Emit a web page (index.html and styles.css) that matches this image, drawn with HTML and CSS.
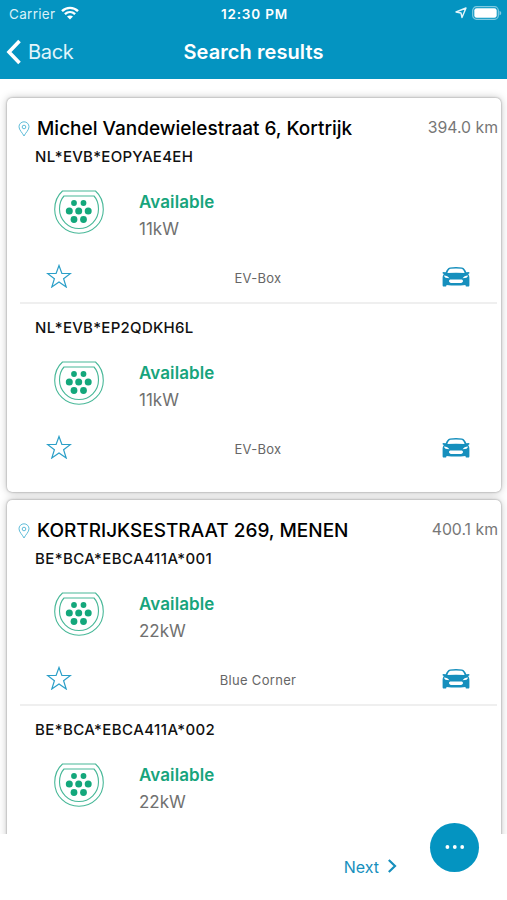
FILE: index.html
```html
<!DOCTYPE html>
<html lang="en">
<head>
    <meta charset="UTF-8">
    <meta name="viewport" content="width=device-width, initial-scale=1.0">
    <title>Search results</title>
    <link rel="stylesheet" href="styles.css">
</head>
<body>

    <!-- Icons shared by the station rows -->
    <svg class="symbols">
        <symbol id="pin" viewBox="0 0 12 16">
            <path d="M6 15C4.6 12 1 9 1 5.8a5 5 0 0 1 10 0C11 9 7.4 12 6 15z"/>
            <circle cx="6" cy="6" r="1.8"/>
        </symbol>
        <symbol id="plug" viewBox="0 0 50 44">
            <path d="M8.500 1h33C46 5 49.300 12 49.300 19.500c0 13.500-10.900 23.800-24.300 23.800S.7 33 .7 19.500C.7 12 4 5 8.500 1z"/>
            <path d="M10 6h30c3 3.200 4.500 8 4.500 13 0 10.800-8.700 19.500-19.500 19.500S5.500 29.800 5.500 19c0-5 1.500-9.800 4.500-13z"/>
            <g class="pins">
                <circle cx="20" cy="13" r="2.900"/>
                <circle cx="29.500" cy="13" r="2.900"/>
                <circle cx="15.300" cy="21" r="3.500"/>
                <circle cx="24.700" cy="21" r="3.500"/>
                <circle cx="34.200" cy="21" r="3.500"/>
                <circle cx="20" cy="29.500" r="3.400"/>
                <circle cx="29.500" cy="29.500" r="3.400"/>
            </g>
        </symbol>
        <symbol id="star" viewBox="0 0 26 24">
            <path d="M13 1.500l2.900 8H24.500l-6.900 5.200 2.600 8.300L13 18l-7.200 5 2.600-8.300L1.500 9.500h8.600z"/>
        </symbol>
        <symbol id="car" viewBox="0 0 28 20">
            <path fill-rule="evenodd" d="M8 .6Q14-.4 20 .6C22.200 1 23.300 3 24.300 5.300L27.300 5v1.500l-1.200.6c1 1.200 1.300 2.600 1.300 4.400V18c0 1-.4 1.500-1.200 1.500h-1.500c-.8 0-1.200-.6-1.200-1.600Q14 19 4.500 17.900c0 1-.4 1.600-1.200 1.600H1.800C1 19.500.6 19 .6 18v-6.500c0-1.800.3-3.200 1.300-4.400L.7 6.500V5l3 .3C4.700 3 5.800 1 8 .6zM8.500 1.800C7 2.100 6 4 5.400 6Q14 5.300 22.600 6C22 4 21 2.100 19.500 1.800Q14 1 8.500 1.800zM2 8.600c.3 2.200 2 2.700 5.400 2.700C6.500 9.700 4.500 8.800 2 8.600zM26 8.600c-.3 2.200-2 2.700-5.400 2.700.9-1.600 2.900-2.500 5.400-2.700zM9 12.500c-1.500 0-2 .7-2 1.500S8 16 9 16h10c1 0 2-1.200 2-2s-.5-1.500-2-1.500z"/>
        </symbol>
    </svg>

    <header>
        <div class="status-bar">
            <div class="carrier">
                <span>Carrier</span>
                <svg class="wifi" viewBox="0 0 18 14">
                    <path d="M1 5.200C5.500.7 12.500.7 17 5.200M3.900 8.200c3-2.800 7.200-2.800 10.200 0"/>
                    <path class="solid" d="M9 13.500l-3-3c1.700-1.400 4.300-1.400 6 0z"/>
                </svg>
            </div>
            <div class="time">12:30 PM</div>
            <div class="indicators">
                <svg class="location" viewBox="0 0 12 12">
                    <path d="M11 1L7 10.500 6 6 1 5z"/>
                </svg>
                <svg class="battery" viewBox="0 0 30 14">
                    <rect class="shell" x=".7" y=".7" width="25.600" height="12.600" rx="3.800"/>
                    <rect class="level" x="2.300" y="2.300" width="22.400" height="9.400" rx="2.300"/>
                    <path class="cap" d="M27.500 4.700c2.300.8 2.300 3.800 0 4.600z"/>
                </svg>
            </div>
        </div>
        <nav>
            <a class="back">
                <svg viewBox="0 0 16 26"><path d="M13.500 2L3 13l10.500 11"/></svg>
                <span>Back</span>
            </a>
            <h1>Search results</h1>
        </nav>
    </header>

    <main>
        <section class="card">
            <div class="address">
                <svg class="pin"><use href="#pin"/></svg>
                <h2>Michel Vandewielestraat 6, Kortrijk</h2>
                <span class="distance">394.0 km</span>
            </div>
            <article class="station">
                <h3>NL*EVB*EOPYAE4EH</h3>
                <div class="connector">
                    <svg class="plug"><use href="#plug"/></svg>
                    <div>
                        <p class="status">Available</p>
                        <p class="power">11kW</p>
                    </div>
                </div>
                <div class="actions">
                    <svg class="star"><use href="#star"/></svg>
                    <span>EV-Box</span>
                    <svg class="car"><use href="#car"/></svg>
                </div>
            </article>
            <article class="station">
                <h3>NL*EVB*EP2QDKH6L</h3>
                <div class="connector">
                    <svg class="plug"><use href="#plug"/></svg>
                    <div>
                        <p class="status">Available</p>
                        <p class="power">11kW</p>
                    </div>
                </div>
                <div class="actions">
                    <svg class="star"><use href="#star"/></svg>
                    <span>EV-Box</span>
                    <svg class="car"><use href="#car"/></svg>
                </div>
            </article>
        </section>

        <section class="card">
            <div class="address">
                <svg class="pin"><use href="#pin"/></svg>
                <h2>KORTRIJKSESTRAAT 269, MENEN</h2>
                <span class="distance">400.1 km</span>
            </div>
            <article class="station">
                <h3 class="long-id">BE*BCA*EBCA411A*001</h3>
                <div class="connector">
                    <svg class="plug"><use href="#plug"/></svg>
                    <div>
                        <p class="status">Available</p>
                        <p class="power">22kW</p>
                    </div>
                </div>
                <div class="actions">
                    <svg class="star"><use href="#star"/></svg>
                    <span>Blue Corner</span>
                    <svg class="car"><use href="#car"/></svg>
                </div>
            </article>
            <article class="station">
                <h3 class="long-id">BE*BCA*EBCA411A*002</h3>
                <div class="connector">
                    <svg class="plug"><use href="#plug"/></svg>
                    <div>
                        <p class="status">Available</p>
                        <p class="power">22kW</p>
                    </div>
                </div>
            </article>
        </section>
    </main>

    <footer>
        <a class="next">
            <span>Next</span>
            <svg viewBox="0 0 10 16"><path d="M1.800 2L8 8l-6.200 6"/></svg>
        </a>
        <button class="more" aria-label="More">
            <svg viewBox="0 0 20 4">
                <circle cx="2.400" cy="2" r="1.900"/>
                <circle cx="9.800" cy="2" r="1.900"/>
                <circle cx="17.200" cy="2" r="1.900"/>
            </svg>
        </button>
    </footer>

</body>
</html>
```
FILE: styles.css
```css
* {
    box-sizing: border-box;
}
body {
    font-family: Inter, "Liberation Sans", sans-serif;
    margin: 0;
    height: 900px;
    display: flex;
    flex-direction: column;
    overflow: hidden;
    background: #fff;
    color: #111;
}
h1, h2, h3, p {
    margin: 0;
    white-space: nowrap;
}
svg {
    display: block;
    flex: none;
    fill: none;
}
.symbols {
    display: none;
}

/* Top bar */
header {
    height: 79px;
    flex: none;
    background: #0494c1;
    color: #fff;
}
.status-bar {
    height: 27px;
    padding: 0 7px 0 9px;
    display: grid;
    grid-template-columns: 1fr auto 1fr;
    align-items: center;
    font-size: 13.5px;
}
.carrier {
    display: flex;
    align-items: center;
    gap: 6px;
    color: #d9f1f8;
}
.carrier span {
    letter-spacing: 0.3px;
}
.wifi {
    width: 18px;
    height: 14px;
    margin-top: -2px;
    stroke: #fff;
    stroke-width: 2.4;
}
.wifi .solid {
    fill: #fff;
    stroke: none;
}
.time {
    font-weight: 600;
    font-size: 13.5px;
    letter-spacing: 0.8px;
}
.indicators {
    display: flex;
    justify-content: flex-end;
    align-items: center;
    gap: 5px;
    margin-right: -2px;
    margin-top: -1px;
}
.location {
    width: 12px;
    height: 12px;
    stroke: #e4f5fa;
    stroke-width: 1.4;
    stroke-linejoin: round;
}
.battery {
    width: 30px;
    height: 14px;
}
.battery .shell {
    stroke: #80cae1;
    stroke-width: 1.2;
}
.battery .level {
    fill: #fff;
}
.battery .cap {
    fill: #80cae1;
}
nav {
    height: 50px;
    padding: 0 6px;
    display: grid;
    grid-template-columns: 1fr auto 1fr;
    align-items: center;
}
.back {
    display: flex;
    align-items: center;
    gap: 6px;
    font-size: 20px;
    letter-spacing: -0.3px;
    color: #e0f5fb;
}
.back svg {
    width: 16px;
    height: 26px;
    stroke: #fff;
    stroke-width: 3.6;
}
h1 {
    font-size: 20px;
    font-weight: 600;
    letter-spacing: 0.08px;
}

/* Result list, cut off above the footer */
main {
    height: 755px;
    flex: none;
    padding: 19px 6px 0 7px;
    overflow: hidden;
}
.card {
    height: 394px;
    margin-bottom: 8px;
    padding-top: 18px;
    border-radius: 5px;
    background: #fff;
    box-shadow: 0 0 2px rgba(0, 0, 0, 0.4), 0 0 9px rgba(0, 0, 0, 0.25);
}
.address {
    height: 26px;
    padding: 0 3px 0 11px;
    display: flex;
    align-items: center;
}
.pin {
    width: 12px;
    height: 16px;
    margin-right: 7px;
    stroke: #4db4d4;
    stroke-width: 0.9;
}
h2 {
    font-size: 19px;
    font-weight: 500;
    line-height: 26px;
    color: #000;
}
.distance {
    margin: 0 0 3px auto;
    font-size: 15.8px;
    color: #777;
    white-space: nowrap;
}
.station {
    height: 160px;
    margin: 0 4px 0 13px;
    padding: 5px 0 0 15px;
}
.station + .station {
    height: 171px;
    padding-top: 14px;
    border-top: 2px solid #efefef;
}
h3 {
    font-size: 15px;
    font-weight: 500;
    line-height: 20px;
    letter-spacing: 0.28px;
}
h3.long-id {
    letter-spacing: 0.42px;
}
.connector {
    height: 96px;
    padding: 23px 0 0 19px;
    display: flex;
    gap: 35px;
}
.plug {
    width: 50px;
    height: 44px;
    stroke: #48b898;
    stroke-width: 1.1;
}
.pins {
    fill: #13a77b;
    stroke: none;
}
.status {
    font-size: 17px;
    font-weight: 600;
    line-height: 24px;
    letter-spacing: 0.1px;
    color: #17a47c;
}
.power {
    margin-top: 2px;
    font-size: 17px;
    line-height: 26px;
    color: #707070;
}
.actions {
    height: 30px;
    padding: 0 27px 0 11px;
    display: grid;
    grid-template-columns: 1fr auto 1fr;
    align-items: center;
    font-size: 13px;
    line-height: 30px;
    letter-spacing: 0.3px;
    color: #666;
}
.star {
    width: 26px;
    height: 24px;
    margin-bottom: 4px;
    stroke: #2b9fc8;
    stroke-width: 1.2;
}
.car {
    width: 28px;
    height: 20px;
    margin-bottom: 3px;
    justify-self: end;
    fill: #168fbd;
}

/* Paging and floating menu button */
footer {
    flex: 1;
    padding-right: 28px;
    display: flex;
    justify-content: flex-end;
    align-items: flex-start;
    gap: 33px;
    margin-top: -11px;
}
.next {
    display: flex;
    align-items: center;
    gap: 8px;
    margin-top: 34px;
    font-size: 16px;
    color: #168fbd;
}
.next svg {
    width: 10px;
    height: 16px;
    margin-top: -2px;
    stroke: #168fbd;
    stroke-width: 2.2;
}
.more {
    width: 49px;
    height: 49px;
    padding: 0 0 2px;
    display: flex;
    justify-content: center;
    align-items: center;
    border: none;
    border-radius: 50%;
    background: #0494c1;
}
.more svg {
    width: 20px;
    height: 4px;
    fill: #fff;
}
```
